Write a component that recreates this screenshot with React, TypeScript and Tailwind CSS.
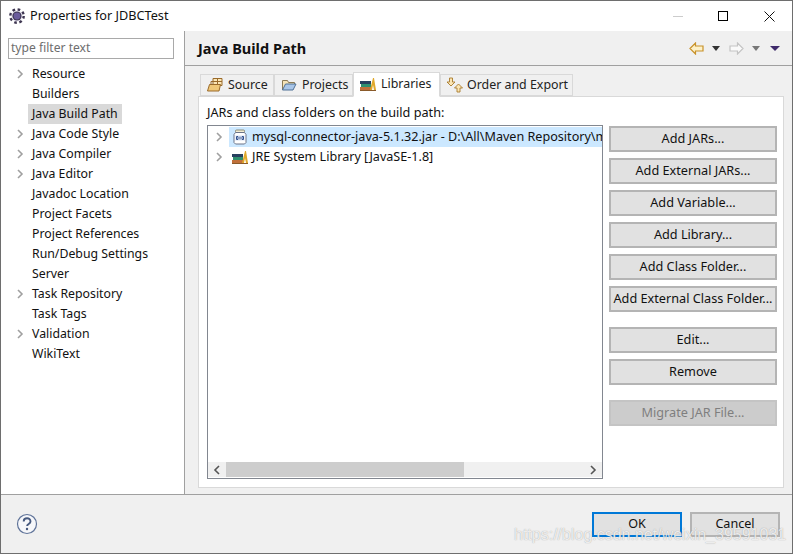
import React from 'react';

const treeItems = [
  { label: 'Resource', arrow: true },
  { label: 'Builders' },
  { label: 'Java Build Path', selected: true },
  { label: 'Java Code Style', arrow: true },
  { label: 'Java Compiler', arrow: true },
  { label: 'Java Editor', arrow: true },
  { label: 'Javadoc Location' },
  { label: 'Project Facets' },
  { label: 'Project References' },
  { label: 'Run/Debug Settings' },
  { label: 'Server' },
  { label: 'Task Repository', arrow: true },
  { label: 'Task Tags' },
  { label: 'Validation', arrow: true },
  { label: 'WikiText' },
];

const Chevron = ({ dark = false }: { dark?: boolean }) => (
  <svg width="8" height="10" viewBox="0 0 8 10" fill="none">
    <path d="M2 1l4 4-4 4" stroke={dark ? '#555555' : '#a0a0a0'} strokeWidth="1.6" />
  </svg>
);

const Books = () => (
  <svg width="16" height="16" viewBox="0 0 16 16">
    <rect x="0" y="11" width="11" height="3" fill="#c0703a" />
    <rect x="1" y="8" width="10" height="3" fill="#2f8f6f" />
    <rect x="0" y="5" width="11" height="3" fill="#27405f" />
    <path d="M10 14L13 2h1l2 12h-2l-1-5-1 5z" fill="#e0a92c" />
    <rect x="0" y="14" width="16" height="1" fill="#8a5a2a" />
  </svg>
);

const SourceIcon = () => (
  <svg width="16" height="16" viewBox="0 0 16 16">
    <path d="M6 1.5h9v7H6z" fill="#fbe6b5" stroke="#9a6a2a" />
    <path d="M10.5 1.5v7M6 4.5h9" stroke="#9a6a2a" />
    <path d="M4 4.5v4M4 4.5h2" stroke="#9a6a2a" fill="none" />
    <path d="M2.5 7.5h11L12 14H0.5z" fill="#f0c878" stroke="#9a6a2a" />
  </svg>
);

const FolderIcon = () => (
  <svg width="16" height="16" viewBox="0 0 16 16">
    <path d="M1.5 13V3.5h5l1 2h6V7" fill="#f4e3b8" stroke="#8a7a55" />
    <path d="M1.5 13l3-6h10.5l-3 6z" fill="#a9c6e8" stroke="#4f7096" />
  </svg>
);

const OrderIcon = () => (
  <svg width="16" height="16" viewBox="0 0 16 16">
    <path d="M2.5 1h3v4H8l-4 4-4-4h2.5z" fill="#fbe6b5" stroke="#a87a2a" strokeWidth="0.9" />
    <path d="M10 15h3v-4h2.5L11.5 7l-4 4H10z" fill="#fbe6b5" stroke="#a87a2a" strokeWidth="0.9" />
  </svg>
);

const JarIcon = () => (
  <svg width="16" height="16" viewBox="0 0 16 16">
    <rect x="3.5" y="1" width="9" height="2.5" rx="1" fill="#f3ecd2" stroke="#8b8b78" />
    <path d="M3.5 3.5h9l1.5 2v8l-1.5 1.5h-9L2 13.5v-8z" fill="#ffffff" stroke="#6b7387" />
    <rect x="3" y="6" width="10" height="6" fill="#eef2fa" />
    <path d="M4.5 7.5v3h1.5v-3zM8 7.5v3M10 7.5v3h1.5v-3z" stroke="#2f4f8f" strokeWidth="1" fill="none" />
  </svg>
);

const GearIcon = () => (
  <svg width="16" height="16" viewBox="0 0 16 16">
    <circle cx="8" cy="8" r="6.4" fill="none" stroke="#3d3550" strokeWidth="3" strokeDasharray="2.5 2.5" />
    <circle cx="8" cy="8" r="5.6" fill="#e9e6f2" />
    <circle cx="8" cy="8" r="4.6" fill="#3d3550" />
    <circle cx="8" cy="8" r="3.4" fill="#6a5b9c" />
  </svg>
);

const NavArrow = ({ left, active }: { left?: boolean; active?: boolean }) => (
  <svg width="15" height="13" viewBox="0 0 15 13">
    <path
      d={left ? 'M1 6.5L6.5 1v3H14v5H6.5v3z' : 'M14 6.5L8.5 1v3H1v5h7.5v3z'}
      fill={active ? '#fdf1c8' : '#fafafa'}
      stroke={active ? '#c8922a' : '#c4c4c4'}
      strokeWidth="1.2"
    />
  </svg>
);

const Caret = ({ color, wide = false }: { color: string; wide?: boolean }) => (
  <svg width={wide ? 10 : 8} height="5" viewBox="0 0 10 5" preserveAspectRatio="none">
    <path d="M0 0h10L5 5z" fill={color} />
  </svg>
);

const SideButton = ({ label, className = '', disabled = false }: { label: string; className?: string; disabled?: boolean }) => (
  <div
    className={`h-[26px] w-[168px] shrink-0 flex items-center justify-center border-2 text-[12.7px] whitespace-nowrap ${
      disabled ? 'bg-[#cccccc] border-[#c4c4c4] text-[#7f7f7f]' : 'bg-[#e1e1e1] border-[#b4b4b4] text-[#111111]'
    } ${className}`}
  >
    {label}
  </div>
);

const Tab = ({ icon, label, active = false, gap = 'gap-[5px]', width }: { icon: React.ReactNode; label: string; active?: boolean; gap?: string; width: string }) => (
  <div
    className={`flex items-center shrink-0 pl-[6px] border border-[#d9d9d9] whitespace-nowrap ${gap} ${width} ${
      active ? 'h-[25px] pb-[1px] bg-white border-b-white -mb-px z-10' : 'h-[22px] bg-[#f0f0f0]'
    }`}
  >
    {icon}
    <span className="text-[12.4px] text-[#222222]">{label}</span>
  </div>
);

export default function App() {
  return (
    <div className="w-[793px] h-[554px] relative flex flex-col overflow-hidden bg-white border border-[#6e6e6e] text-[#111111] font-['Noto_Sans','Open_Sans',sans-serif] text-[12.6px]">
      {/* Title bar */}
      <div className="h-[30px] shrink-0 flex items-center bg-white">
        <div className="ml-[8px] mr-[5px] flex"><GearIcon /></div>
        <span className="text-[12.7px]">Properties for JDBCTest</span>
        <div className="ml-auto flex items-center">
          <div className="w-[10px] h-px bg-[#cccccc] mr-[35px]" />
          <div className="w-[10px] h-[10px] border border-black mr-[36px]" />
          <svg width="11" height="11" viewBox="0 0 11 11" className="mr-[17px]">
            <path d="M0.5 0.5l10 10M10.5 0.5l-10 10" stroke="#111111" />
          </svg>
        </div>
      </div>

      <div className="flex-1 flex min-h-0">
        {/* Left tree */}
        <div className="w-[184px] shrink-0 border-r border-[#a0a0a0] bg-white pt-[7px]">
          <div className="ml-[7px] w-[166px] h-[21px] border border-[#a9a9a9] flex items-center pl-[2px] text-[12.1px] text-[#6d6d6d]">
            type filter text
          </div>
          <div className="mt-[5px] flex flex-col text-[12.3px]">
            {treeItems.map((item) => (
              <div key={item.label} className="h-[20px] flex items-center">
                <div className="w-[27px] pl-[15px] flex shrink-0">{item.arrow && <Chevron />}</div>
                <div className={`h-[20px] flex items-center px-[4px] ${item.selected ? 'bg-[#d9d9d9]' : ''}`}>{item.label}</div>
              </div>
            ))}
          </div>
        </div>

        {/* Right page */}
        <div className="flex-1 min-w-0 bg-[#f0f0f0] flex flex-col">
          <div className="h-[35px] shrink-0 flex items-center border-b border-[#a0a0a0] pl-[13px] pr-[12px] pt-[1px]">
            <span className="text-[14.5px] font-bold text-[#111111]">Java Build Path</span>
            <div className="ml-auto flex items-center">
              <NavArrow left active />
              <div className="ml-[8px] flex"><Caret color="#333333" /></div>
              <div className="ml-[9px] flex"><NavArrow /></div>
              <div className="ml-[8px] flex"><Caret color="#777777" /></div>
              <div className="ml-[10px] flex"><Caret color="#3f2a6b" wide /></div>
            </div>
          </div>

          <div className="flex-1 min-h-0 pl-[13px] pr-[8px] pt-[7px] pb-[6px] flex flex-col">
            <div className="flex items-end h-[23px] pl-[2px] shrink-0">
              <Tab icon={<SourceIcon />} label="Source" width="w-[74px]" />
              <Tab icon={<FolderIcon />} label="Projects" width="w-[79px]" />
              <Tab icon={<Books />} label="Libraries" active width="w-[87px]" />
              <Tab icon={<OrderIcon />} label="Order and Export" width="w-[133px]" gap="gap-[4px]" />
            </div>

            <div className="flex-1 min-h-0 bg-white border border-[#d9d9d9] px-[8px] pt-[7px] flex flex-col">
              <div className="h-[18px] shrink-0 flex items-center text-[12.7px]">JARs and class folders on the build path:</div>
              <div className="flex-1 min-h-0 flex mt-[3px] mb-[8px]">
                <div className="w-[396px] shrink-0 border border-[#828790] flex flex-col overflow-hidden">
                  <div className="flex-1 min-h-0 pt-[1px]">
                    <div className="h-[20px] flex items-center">
                      <div className="w-[21px] pl-[7px] flex shrink-0"><Chevron /></div>
                      <div className="flex-1 h-[20px] flex items-center bg-[#cce8ff] whitespace-nowrap overflow-hidden">
                        <div className="ml-[3px] mr-[4px] flex shrink-0"><JarIcon /></div>
                        mysql-connector-java-5.1.32.jar - D:\All\Maven Repository\mysql\mysql-connector-java
                      </div>
                    </div>
                    <div className="h-[20px] flex items-center">
                      <div className="w-[21px] pl-[7px] flex shrink-0"><Chevron /></div>
                      <div className="ml-[3px] mr-[4px] flex shrink-0"><Books /></div>
                      JRE System Library [JavaSE-1.8]
                    </div>
                  </div>
                  <div className="h-[15px] shrink-0 mb-px flex items-center bg-[#f0f0f0]">
                    <div className="w-[18px] flex justify-center rotate-180"><Chevron dark /></div>
                    <div className="w-[238px] h-[15px] bg-[#cdcdcd]" />
                    <div className="ml-auto w-[18px] flex justify-center"><Chevron dark /></div>
                  </div>
                </div>

                <div className="ml-[6px] pt-[1px] flex flex-col gap-[6px]">
                  <SideButton label="Add JARs..." />
                  <SideButton label="Add External JARs..." />
                  <SideButton label="Add Variable..." />
                  <SideButton label="Add Library..." />
                  <SideButton label="Add Class Folder..." />
                  <SideButton label="Add External Class Folder..." />
                  <SideButton label="Edit..." className="mt-[9px]" />
                  <SideButton label="Remove" />
                  <SideButton label="Migrate JAR File..." className="mt-[9px]" disabled />
                </div>
              </div>
            </div>
          </div>
        </div>
      </div>

      {/* Footer */}
      <div className="h-[59px] shrink-0 bg-[#f0f0f0] border-t border-[#a0a0a0] flex items-center pl-[15px] pr-[12px]">
        <svg width="22" height="22" viewBox="0 0 22 22">
          <circle cx="11" cy="11" r="9.5" fill="#f6f7fa" stroke="#5f7399" strokeWidth="1.2" />
          <path d="M7.7 8.5c0-4.3 6.8-4.3 6.8 0 0 2.6-3.4 2.4-3.4 4.6" fill="none" stroke="#46597f" strokeWidth="1.9" />
          <circle cx="11" cy="16" r="1.2" fill="#46597f" />
        </svg>
        <div className="ml-auto flex items-center gap-[8px]">
          <div className="w-[90px] h-[25px] flex items-center justify-center bg-[#e1e1e1] border-2 border-[#0078d7]">OK</div>
          <div className="w-[90px] h-[25px] flex items-center justify-center bg-[#e1e1e1] border-2 border-[#b4b4b4]">Cancel</div>
        </div>
      </div>

      {/* CSDN watermark over the dialog */}
      <div className="absolute left-[513px] top-[524px] text-[16px] leading-[20px] whitespace-nowrap text-white/80 font-['Liberation_Sans',sans-serif] [text-shadow:0_0_1px_rgba(110,110,110,0.7)]">
        https://blog.csdn.net/weixin_39591031
      </div>
    </div>
  );
}
